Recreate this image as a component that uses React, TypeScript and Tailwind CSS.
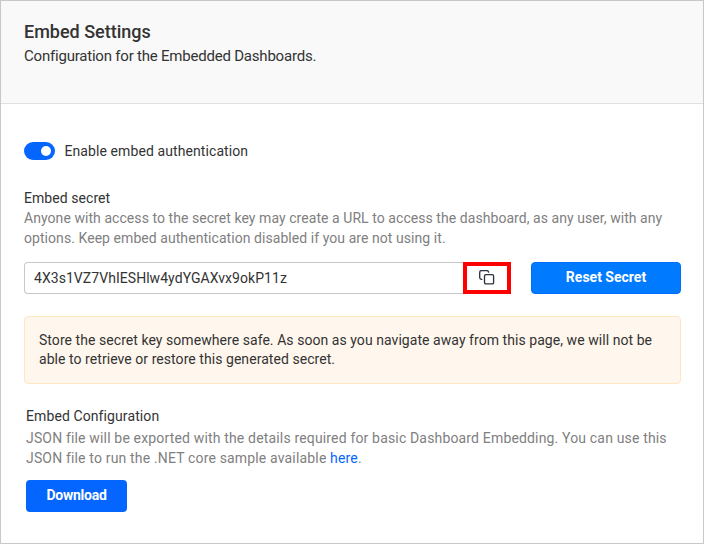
function CopyIcon() {
  return (
    <svg width="16" height="16" viewBox="0 0 16 16" fill="none" stroke="#2b343e" strokeWidth="1.35" strokeLinecap="round" strokeLinejoin="round">
      <rect x="5.5" y="4.6" width="9.1" height="9.3" rx="1.5" />
      <path d="M2.8 9.4H2.4A1.8 1.8 0 0 1 .7 7.6V2.4A1.8 1.8 0 0 1 2.4.6H7.8A1.8 1.8 0 0 1 9.6 2.1" />
    </svg>
  );
}

export default function App() {
  return (
    <div className="flex h-[544px] w-[704px] flex-col border border-[#c8c8c8] bg-white font-[Roboto,sans-serif] text-sm leading-5 whitespace-nowrap text-[#333333]">
      <header className="h-[103px] border-b border-[#e0e0e0] bg-[#f9f9f9] pl-[23px] pt-[19px]">
        <h1 className="text-[18px] leading-6 font-medium">Embed Settings</h1>
        <p className="mt-[2px] text-[15px] leading-5 tracking-[-0.21px]">Configuration for the Embedded Dashboards.</p>
      </header>
      <main className="pl-[23px]">
        <div className="mt-[37px] flex h-5 items-center">
          <button aria-label="Enable embed authentication" className="flex h-[18px] w-[31px] items-center justify-end rounded-full bg-[#0566ff] pr-1">
            <span className="size-[10px] rounded-full bg-white" />
          </button>
          <span className="ml-[9.5px] tracking-[0.09px]">Enable embed authentication</span>
        </div>
        <h2 className="mt-[27px] tracking-[0.06px]">Embed secret</h2>
        <p className="tracking-[0.06px] text-[#808080]">
          Anyone with access to the secret key may create a URL to access the dashboard, as any user, with any
          <br />
          options. Keep embed authentication disabled if you are not using it.
        </p>
        <div className="mt-[14px] flex h-8">
          <div className="flex w-[439px] items-center rounded-l-[4px] border border-r-0 border-[#c8c8c8] pl-[9px] tracking-[0.05px]">4X3s1VZ7VhIESHlw4ydYGAXvx9okP11z</div>
          <button aria-label="Copy secret" className="flex w-12 items-center justify-center border-4 border-[#ff0000]">
            <CopyIcon />
          </button>
          <button className="ml-5 w-[150px] rounded-[4px] border border-[#0070f8] bg-[#007bff] pb-[2px] font-bold text-white">Reset Secret</button>
        </div>
        <div className="mt-[22px] h-[68px] w-[657px] rounded-[4px] border border-[#ffe6c4] bg-[#fff7ed] pl-[14px] pt-[14px] leading-[19px] tracking-[0.055px]">
          Store the secret key somewhere safe. As soon as you navigate away from this page, we will not be
          <br />
          able to retrieve or restore this generated secret.
        </div>
        <section className="mt-[22px] pl-[2px]">
          <h2 className="tracking-[0.1px]">Embed Configuration</h2>
          <p className="mt-[2px] tracking-[0.163px] text-[#808080]">
            JSON file will be exported with the details required for basic Dashboard Embedding. You can use this
            <br />
            JSON file to run the .NET core sample available <a className="text-[#0566ff]">here</a>.
          </p>
          <button className="mt-3 h-8 w-[101px] rounded-[4px] bg-[#0566ff] pb-[2px] font-bold tracking-[-0.25px] text-white">Download</button>
        </section>
      </main>
    </div>
  );
}
